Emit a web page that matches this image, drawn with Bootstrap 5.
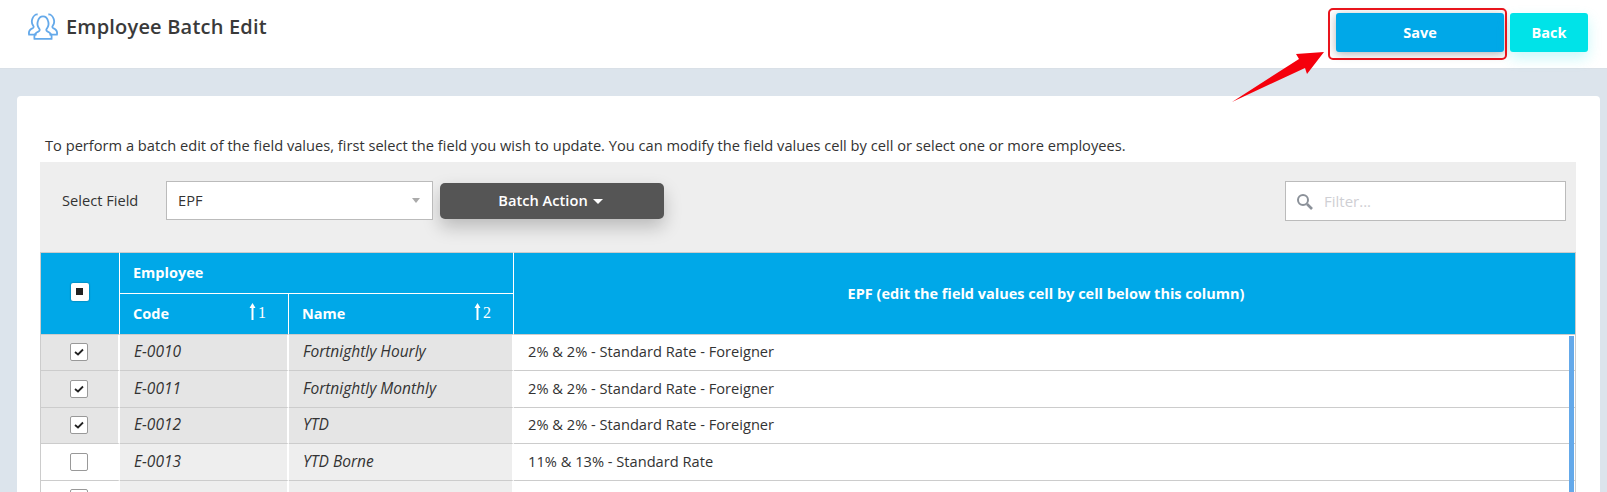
<!DOCTYPE html>
<html lang="en">
<head>
<meta charset="utf-8">
<title>Employee Batch Edit</title>
<link href="https://cdn.jsdelivr.net/npm/bootstrap@5.3.0/dist/css/bootstrap.min.css" rel="stylesheet">
<style>
html,body{height:492px;overflow:hidden}
body{font-family:"Open Sans",sans-serif;font-size:14.65px;color:#333;background:#dce4ec;position:relative}
.topbar{height:69px;background:#fff;border-bottom:1px solid #d9e0e7;padding:13px 19px 0 28px}
.pagetitle{font-size:20px;font-weight:600;color:#3a3a3a;letter-spacing:.2px;line-height:28px;margin:0}
.teamicon{width:30px;height:27px;margin-right:8px;margin-top:-2px;color:#64a9ea}
.btnsave,.btnback{height:39px;border:0;border-radius:3px;color:#fff;font-weight:700;font-size:14.5px;padding:0}
.btnsave{width:168px;background:#00a8e8;box-shadow:0 2px 10px rgba(0,0,0,.3);margin-right:6px}
.btnback{width:78px;background:#00e3e8;box-shadow:0 6px 14px rgba(0,227,232,.22)}
.panel{margin:27px 7px 0 17px;background:#fff;border-radius:4px;height:420px;padding:40px 24px 0 23px;overflow:hidden}
.intro{margin:0 0 0 5px;line-height:19px;height:26px;color:#333}
.toolbar{background:#eee;height:90px;padding:19px 10px 0 22px}
.fieldlabel{width:104px;line-height:38px}
.fieldselect{width:267px;height:39px;background:#fff;border:1px solid #bbb;padding:0 11px;line-height:37px;position:relative}
.fieldselect::after{content:"";position:absolute;right:12px;top:16px;border:4px solid transparent;border-top:5px solid #aaa;border-bottom:0}
.btnbatch{width:224px;height:36px;margin:2px 0 0 7px;background:#555;color:#fff;font-weight:600;font-size:14.65px;border:0;border-radius:5px;box-shadow:0 8px 18px rgba(0,0,0,.22);padding:0 3px 0 0}
.btnbatch::after{margin-left:5px;vertical-align:.15em;border-width:.36em .36em 0}
.filterbox{width:281px;height:40px;background:#fff;border:1px solid #bbb;padding:0 10px;line-height:38px;color:#cfcfd4;font-size:15px}
.filterbox svg{width:17px;height:17px;margin-right:11px;color:#8b9199}
.gridtable{table-layout:fixed;width:1536px;border-collapse:separate;border-spacing:0;border-left:1px solid #ccc;border-right:1px solid #ccc;margin:0}
.gridtable th{background:#00a8e8;color:#fff;font-weight:700;font-size:14.5px;padding:0 13px;border-right:1px solid #fff;border-bottom:1px solid #ccc}
.headtop th{height:42px;border-top:1px solid #ccc}
.headtop .lineunder{border-bottom:1px solid #fff}
.headsub th{height:41px}
.lastcol{border-right:0!important;text-align:center;padding-right:10px!important}
.gridtable td{padding:0 14px 1px 14px;border-bottom:1px solid #ccc;vertical-align:middle;background:#fff}
.gridtable tbody tr:nth-child(odd) td{height:36px}
.gridtable tbody tr:nth-child(even) td{height:37px}
.gridtable td.chkcell{padding:0;text-align:center;border-right:2px solid #fff}
.gridtable td.keycell{background:#eee;font-style:italic;font-size:15.5px;border-right:2px solid #fff}
tr.picked td.chkcell,tr.picked td.keycell{background:#e5e5e5}
.sorttag{float:right;font-family:"Liberation Serif",serif;font-weight:400;font-size:16px;line-height:20px;margin-right:9px}
.sorttag svg{width:7px;height:17px;vertical-align:-2px;margin-right:2px}
.tick{display:inline-block;width:18px;height:18px;vertical-align:middle;background:#fff;border:1px solid #999;border-radius:2px;margin:-3px 1px 0 0;line-height:0}
.tick svg{width:16px;height:16px}
.tickall{border:0;box-shadow:0 0 2px rgba(0,0,0,.45);margin-top:-5px}
.scrollmark{position:absolute;left:1569px;top:336px;width:5px;height:156px;background:#64a9ea}
.redbox{position:absolute;left:1328px;top:8px;width:179px;height:52px;border:2px solid #e8141c;border-radius:5px;pointer-events:none}
.redarrow{position:absolute;left:1225px;top:45px;width:110px;height:65px;pointer-events:none}
</style>
</head>
<body>
<header class="topbar d-flex justify-content-between align-items-start">
  <div class="d-flex align-items-center">
    <svg class="teamicon" viewBox="1 2 28 25" fill="none" stroke="currentColor" stroke-width="1.700"><path d="M9 22H2c-.6-3 .8-5 3.500-6 1-.4 1-1.500.3-2.300C4.500 12 4.300 9.700 5 7.500 5.800 5 8 3 10 3.300"/><path d="M21 22h7c.6-3-.8-5-3.500-6-1-.4-1-1.500-.3-2.300 1.300-1.700 1.500-4 .8-6.200C24.200 5 22 3 20 3.300"/><path d="M7 26c-.6-3.500 1-5.800 4-7 1.200-.5 1.200-1.800.3-2.800-1.500-1.800-1.800-4.500-1-7C11 6.500 13 5 15 5s4 1.500 4.700 4.200c.8 2.500.500 5.200-1 7-.9 1-.9 2.300.3 2.800 3 1.200 4.600 3.500 4 7z"/></svg>
    <h1 class="pagetitle">Employee Batch Edit</h1>
  </div>
  <div class="d-flex">
    <button class="btnsave" type="button">Save</button>
    <button class="btnback" type="button">Back</button>
  </div>
</header>
<main class="panel">
  <p class="intro">To perform a batch edit of the field values, first select the field you wish to update. You can modify the field values cell by cell or select one or more employees.</p>
  <div class="toolbar d-flex align-items-start">
    <div class="fieldlabel">Select Field</div>
    <div class="fieldselect">EPF</div>
    <button class="btnbatch dropdown-toggle" type="button">Batch Action</button>
    <div class="filterbox ms-auto d-flex align-items-center">
      <svg viewBox="0 0 17 17" fill="none" stroke="currentColor"><circle cx="7" cy="7" r="5" stroke-width="2"/><path d="M11 11l5 5" stroke-width="2.600"/></svg>Filter...
    </div>
  </div>
  <table class="gridtable">
    <colgroup><col style="width:79px"><col style="width:169px"><col style="width:225px"><col></colgroup>
    <thead>
      <tr class="headtop">
        <th rowspan="2" class="text-center px-0"><span class="tick tickall d-inline-flex align-items-center justify-content-center"><svg viewBox="0 0 16 16"><rect x="4" y="4" width="7" height="7" fill="#222"/></svg></span></th>
        <th colspan="2" class="lineunder">Employee</th>
        <th rowspan="2" class="lastcol">EPF (edit the field values cell by cell below this column)</th>
      </tr>
      <tr class="headsub">
        <th>Code<span class="sorttag"><svg viewBox="0 0 7 17"><path d="M3.500 0L6.500 5H4.500V17H2.500V5H.5z" fill="#fff"/></svg>1</span></th>
        <th>Name<span class="sorttag"><svg viewBox="0 0 7 17"><path d="M3.500 0L6.500 5H4.500V17H2.500V5H.5z" fill="#fff"/></svg>2</span></th>
      </tr>
    </thead>
    <tbody>
      <tr class="picked"><td class="chkcell"><span class="tick"><svg viewBox="0 0 16 16" fill="none" stroke="#222" stroke-width="1.800"><path d="M4 8l3 2.500L12 5.500"/></svg></span></td><td class="keycell">E-0010</td><td class="keycell">Fortnightly Hourly</td><td>2% &amp; 2% - Standard Rate - Foreigner</td></tr>
      <tr class="picked"><td class="chkcell"><span class="tick"><svg viewBox="0 0 16 16" fill="none" stroke="#222" stroke-width="1.800"><path d="M4 8l3 2.500L12 5.500"/></svg></span></td><td class="keycell">E-0011</td><td class="keycell">Fortnightly Monthly</td><td>2% &amp; 2% - Standard Rate - Foreigner</td></tr>
      <tr class="picked"><td class="chkcell"><span class="tick"><svg viewBox="0 0 16 16" fill="none" stroke="#222" stroke-width="1.800"><path d="M4 8l3 2.500L12 5.500"/></svg></span></td><td class="keycell">E-0012</td><td class="keycell">YTD</td><td>2% &amp; 2% - Standard Rate - Foreigner</td></tr>
      <tr><td class="chkcell"><span class="tick"></span></td><td class="keycell">E-0013</td><td class="keycell">YTD Borne</td><td>11% &amp; 13% - Standard Rate</td></tr>
      <tr><td class="chkcell"><span class="tick"></span></td><td class="keycell"></td><td class="keycell"></td><td></td></tr>
    </tbody>
  </table>
</main>
<div class="scrollmark"></div>
<div class="redbox"></div>
<svg class="redarrow" viewBox="0 0 110 65"><path d="M7 57L74 14 71 9 99 7 82 29 80 23z" fill="#f5000c"/></svg>
</body>
</html>
